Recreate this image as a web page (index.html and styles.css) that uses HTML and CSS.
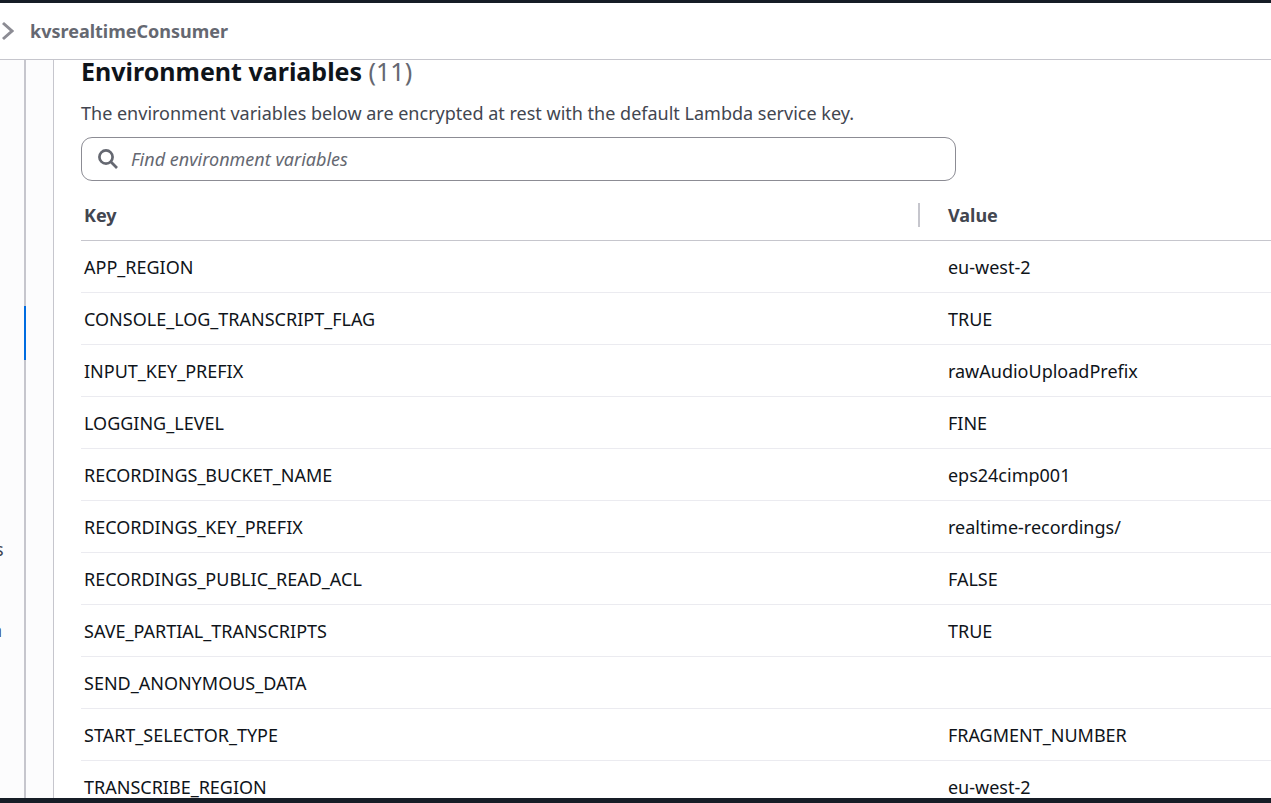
FILE: index.html
```html
<!DOCTYPE html>
<html lang="en">
<head>
<meta charset="utf-8">
<title>kvsrealtimeConsumer</title>
<link rel="stylesheet" href="styles.css">
</head>
<body>
<div class="app">
  <header class="crumbs">
    <svg class="chevron" viewBox="0 0 14 20" aria-hidden="true"><path d="M3 2l9 8-9 8"/></svg>
    <span class="crumb">kvsrealtimeConsumer</span>
  </header>
  <div class="body">
    <nav class="side" aria-label="Configuration">
      <span class="marker"></span>
      <a class="side-link" href="#s">s</a>
      <a class="side-link side-link-next" href="#n">n</a>
    </nav>
    <main class="card">
      <h2 class="title">Environment variables <span class="count">(11)</span></h2>
      <p class="desc">The environment variables below are encrypted at rest with the default Lambda service key.</p>
      <label class="search">
        <svg class="search-icon" viewBox="0 0 20 20" aria-hidden="true"><circle cx="8" cy="8" r="6.6"/><path d="M12.8 12.8L19 19"/></svg>
        <input class="search-input" type="text" placeholder="Find environment variables" aria-label="Find environment variables">
      </label>
      <table class="vars">
        <thead><tr><th class="key-head"><span class="key-label">Key</span></th><th>Value</th></tr></thead>
        <tbody>
          <tr><td>APP_REGION</td><td>eu-west-2</td></tr>
          <tr><td>CONSOLE_LOG_TRANSCRIPT_FLAG</td><td>TRUE</td></tr>
          <tr><td>INPUT_KEY_PREFIX</td><td>rawAudioUploadPrefix</td></tr>
          <tr><td>LOGGING_LEVEL</td><td>FINE</td></tr>
          <tr><td>RECORDINGS_BUCKET_NAME</td><td>eps24cimp001</td></tr>
          <tr><td>RECORDINGS_KEY_PREFIX</td><td>realtime-recordings/</td></tr>
          <tr><td>RECORDINGS_PUBLIC_READ_ACL</td><td>FALSE</td></tr>
          <tr><td>SAVE_PARTIAL_TRANSCRIPTS</td><td>TRUE</td></tr>
          <tr><td>SEND_ANONYMOUS_DATA</td><td></td></tr>
          <tr><td>START_SELECTOR_TYPE</td><td>FRAGMENT_NUMBER</td></tr>
          <tr><td>TRANSCRIBE_REGION</td><td>eu-west-2</td></tr>
        </tbody>
      </table>
    </main>
  </div>
</div>
</body>
</html>
```

FILE: styles.css
```css
* { box-sizing: border-box; }
body {
  margin: 0;
  background: #fff;
  color: #0f141a;
  font-family: "Noto Sans", "Open Sans", sans-serif;
  font-size: 18px;
  line-height: 24px;
}
.app {
  display: flex;
  flex-direction: column;
  height: 100vh;
  overflow: hidden;
  border-top: 3px solid #161d26;
  border-bottom: 5px solid #161d26;
}
.crumbs {
  display: flex;
  flex: none;
  align-items: center;
  gap: 16px;
  height: 57px;
  padding-bottom: 1px;
  border-bottom: 1px solid #c6c6cd;
}
.chevron {
  width: 14px;
  height: 20px;
  fill: none;
  stroke: #8c8c94;
  stroke-width: 3;
}
.crumb { color: #656871; font-weight: 700; }
.body {
  display: flex;
  flex: 1;
  min-height: 0;
  background: #fcfcfd;
}
.side {
  position: relative;
  display: flex;
  flex-direction: column;
  flex: none;
  width: 26px;
  padding-top: 477px;
  border-right: 2px solid #c6c6cd;
}
.marker {
  position: absolute;
  top: 246px;
  right: -2px;
  width: 2px;
  height: 54px;
  background: #006ce0;
}
.side-link {
  width: 24px;
  margin-left: -5px;
  color: #424650;
  text-decoration: none;
}
.side-link-next { margin: 57px 0 0 -9px; }
.card {
  flex: 1;
  min-width: 0;
  margin-left: 27px;
  padding-left: 27px;
  overflow: hidden;
  border-left: 1px solid #c6c6cd;
  background: #fff;
}
.title {
  margin: 0;
  font-size: 25px;
  line-height: 22px;
}
.count { color: #656871; font-weight: 400; }
.desc { margin: 19px 0 12px; color: #424650; }
.search {
  display: flex;
  align-items: center;
  gap: 13px;
  width: 73.5%;
  height: 44px;
  padding: 0 16px;
  border: 1px solid #8c8c94;
  border-radius: 11px;
}
.search-icon {
  flex: none;
  width: 20px;
  height: 20px;
  fill: none;
  stroke: #656871;
  stroke-width: 2.7;
}
.search-input {
  flex: 1;
  min-width: 0;
  padding: 0;
  border: 0;
  outline: 0;
  background: none;
  color: inherit;
  font: inherit;
}
.search-input::placeholder {
  color: #656871;
  font-style: italic;
  opacity: 1;
}
.vars {
  width: 100%;
  margin-top: 10px;
  border-collapse: separate;
  border-spacing: 0;
  table-layout: fixed;
}
th {
  height: 50px;
  padding: 0 28px 1px;
  border-bottom: 1px solid #c6c6cd;
  color: #424650;
  font-weight: 700;
  text-align: left;
}
.key-head { width: 70.5%; padding: 0 0 1px; }
.key-label {
  display: block;
  padding-left: 3px;
  border-right: 2px solid #c6c6cd;
}
td {
  height: 52px;
  padding: 0 28px;
  border-bottom: 1px solid #ebebf0;
}
td:first-child { padding: 0 3px; }
```
